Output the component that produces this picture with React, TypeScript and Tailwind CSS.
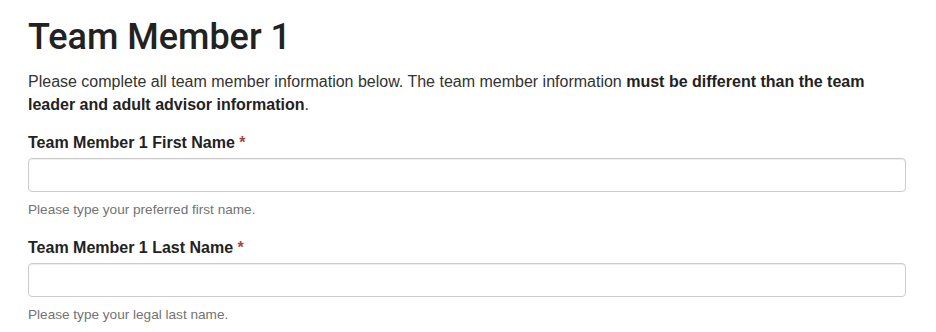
import React from 'react';

const fields = [
  { label: 'Team Member 1 First Name', help: 'Please type your preferred first name.' },
  { label: 'Team Member 1 Last Name', help: 'Please type your legal last name.' },
];

interface FieldProps {
  label: string;
  help: string;
}

const Field: React.FC<FieldProps> = ({ label, help }) => (
  <div className="mb-[19px]">
    <label className="block text-[16px] font-bold leading-[20px] text-[#222] mb-[5px]">
      {label} <span className="text-[#a94442]">*</span>
    </label>
    <input
      type="text"
      className="block w-full h-[34px] rounded-[4px] border border-[#ccc] bg-white px-3 shadow-[inset_0_1px_1px_rgba(0,0,0,0.075)] outline-none"
    />
    <p className="mt-[9px] text-[13.6px] leading-[18px] text-[#737373]">{help}</p>
  </div>
);

export default function App() {
  return (
    <div className="bg-white pl-[28px] pr-[30px] pt-[17px] font-['Liberation_Sans',Arial,sans-serif] text-[#333]">
      <h1 className="text-[36px] leading-[40px] font-medium text-[#222] font-['Roboto','Liberation_Sans',sans-serif]">Team Member 1</h1>
      <p className="mt-[13px] mb-[17px] text-[16px] leading-[23px]">
        Please complete all team member information below. The team member information{' '}
        <strong className="font-bold text-[#222]">must be different than the team leader and adult advisor information</strong>.
      </p>
      {fields.map((f, i) => (
        <Field key={i} {...f} />
      ))}
    </div>
  );
}
